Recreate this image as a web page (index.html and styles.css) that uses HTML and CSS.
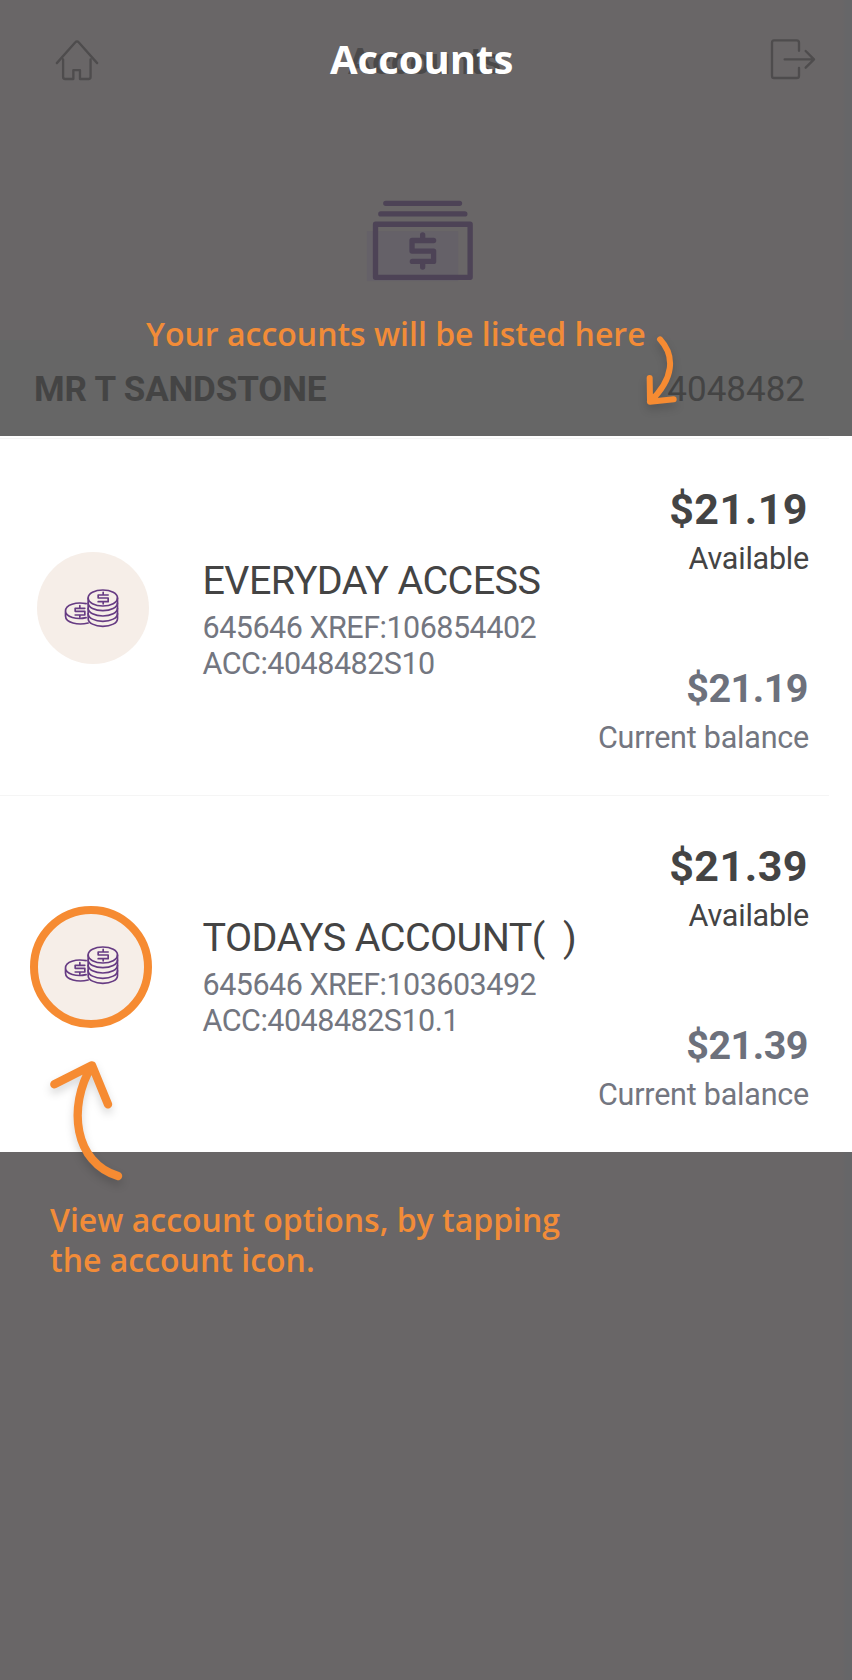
FILE: index.html
```html
<!DOCTYPE html>
<html lang="en">
<head>
    <meta charset="UTF-8">
    <meta name="viewport" content="width=device-width, initial-scale=1.0">
    <title>Accounts</title>
    <link rel="stylesheet" href="styles.css">
</head>
<body>
    <svg class="symbols" aria-hidden="true">
        <symbol id="coins" viewBox="130 143 170 120">
            <ellipse cx="249" cy="173" rx="44" ry="24"/>
            <path d="M205 173v62c0 13 20 23 44 23s44-10 44-23v-62"/>
            <path d="M205 188c0 13 20 23 44 23s44-10 44-23M205 204c0 13 20 23 44 23s44-10 44-23M205 220c0 13 20 23 44 23s44-10 44-23"/>
            <path d="M199 190c-30-6-62 3-62 22 0 18 34 27 62 20M137 212v15c0 20 37 29 68 21"/>
            <path d="M265 164h-30v9h30v11h-30M250 156v8M250 184v7M195 204h-29v9h29v11h-29M180 196v8M180 224v7"/>
        </symbol>
    </svg>

    <div class="page">
        <header class="header">
            <svg class="icon-home" viewBox="165 110 132 130">
                <path d="M170 186l56-63q5-6 10 0l56 63M189 175v53q0 6 6 6h25v-27h20v27h26q6 0 6-6v-53"/>
            </svg>
            <h1 class="title">Accounts</h1>
            <svg class="icon-logout" viewBox="1033 115 138 126">
                <path d="M1120 153v-24q0-7-7-7h-68q-6 0-6 7v99q0 7 6 7h68q7 0 7-7v-23M1077 179h87M1140 154l25 25-25 25"/>
            </svg>
        </header>

        <section class="hero">
            <svg class="icon-cash" viewBox="75 55 330 250">
                <rect class="tint" x="80" y="152" width="275" height="150"/>
                <path d="M137 68h222M122 100h253"/>
                <rect x="106" y="131" width="285" height="160"/>
                <path d="M281 180h-65v32h65v31h-64M248 163v17M248 243v17"/>
            </svg>
        </section>

        <div class="owner">
            <span class="owner-name">MR T SANDSTONE</span>
            <span class="owner-number">4048482</span>
        </div>

        <main class="list">
            <div class="account">
                <div class="badge"><svg><use href="#coins"/></svg></div>
                <div class="info">
                    <div class="name">EVERYDAY ACCESS</div>
                    <div class="ref">645646 XREF:106854402<br>ACC:4048482S10</div>
                </div>
                <div class="amounts">
                    <div class="available">$21.19</div>
                    <div class="label">Available</div>
                    <div class="current">$21.19</div>
                    <div class="label label-current">Current balance</div>
                </div>
            </div>
            <div class="account">
                <div class="badge"><svg><use href="#coins"/></svg></div>
                <div class="info">
                    <div class="name">TODAYS ACCOUNT(&nbsp; )</div>
                    <div class="ref">645646 XREF:103603492<br>ACC:4048482S10.1</div>
                </div>
                <div class="amounts">
                    <div class="available">$21.39</div>
                    <div class="label">Available</div>
                    <div class="current">$21.39</div>
                    <div class="label label-current">Current balance</div>
                </div>
            </div>
        </main>

        <!-- help overlay -->
        <div class="tip tip-title">Accounts</div>
        <div class="tip tip-list">Your accounts will be listed here</div>
        <svg class="arrow arrow-list" viewBox="640 90 140 260">
            <path d="M700 118c46 50 42 118-30 187M669 234l1 71 71-7"/>
        </svg>
        <div class="ring"></div>
        <svg class="arrow arrow-icon" viewBox="70 490 260 420">
            <path d="M295 859C165 820 141 653 217 527M104 584l113-57 48 117"/>
        </svg>
        <div class="tip tip-icon">View account options, by tapping<br>the account icon.</div>
    </div>
</body>
</html>
```

FILE: styles.css
```css
*{
    margin:0;
    padding:0;
    box-sizing:border-box;
}
body{
    background:#696667;
    font-family:Roboto, "Liberation Sans", sans-serif;
    color:#444;
}
svg{
    fill:none;
    stroke-linecap:round;
    stroke-linejoin:round;
}
.symbols{
    position:absolute;
    width:0;
    height:0;
}
.page{
    position:relative;
    width:852px;
    height:1680px;
    overflow:hidden;
    background:linear-gradient(to right, #696667 842px, #666668 846px);
}

/* header */
.header{
    display:flex;
    align-items:center;
    justify-content:space-between;
    height:120px;
    padding:0 36px 2px 55px;
}
.icon-home{
    width:44px;
    height:43px;
    stroke:#4e4c4d;
    stroke-width:7;
}
.icon-logout{
    width:46px;
    height:42px;
    stroke:#4e4c4d;
    stroke-width:7;
}
.title{
    padding:6px 20px 0 0;
    font-size:36px;
    line-height:42px;
    font-weight:700;
    color:#4a494a;
}
.hero{
    display:flex;
    justify-content:center;
    height:220px;
    padding:79px 12px 0 0;
}
.icon-cash{
    width:110px;
    height:83px;
    stroke:#4d4356;
    stroke-width:16;
}
.icon-cash .tint{
    fill:#656168;
    stroke:none;
}
.owner{
    display:flex;
    align-items:center;
    justify-content:space-between;
    height:96px;
    padding:4px 47px 0 34px;
    background:#666;
    font-size:35px;
    line-height:92px;
    color:#444;
}
.owner-name{
    font-weight:700;
    letter-spacing:-.12px;
}

/* account list */
.list{
    height:716px;
    padding-top:2px;
    background:#fff;
}
.account{
    display:flex;
    height:357px;
    padding-right:44px;
    background:linear-gradient(to right, #f5f5f5 829px, #fff 829px) top / 100% 1px no-repeat;
}
.badge{
    display:flex;
    align-items:center;
    justify-content:center;
    width:112px;
    height:112px;
    margin:114px 54px 0 36.5px;
    padding:0 2px 0 0;
    border-radius:50%;
    background:#f6eee8;
}
.badge svg{
    width:57px;
    height:40px;
    stroke:#663b83;
    stroke-width:5;
}
.info{
    flex:1;
    padding-top:120px;
    white-space:nowrap;
}
.name{
    font-size:39.5px;
    line-height:46px;
    letter-spacing:-.58px;
}
.ref{
    margin-top:6px;
    font-size:30.5px;
    line-height:35.5px;
    letter-spacing:-.5px;
    color:#737680;
}
.amounts{
    padding-top:46px;
    text-align:right;
    white-space:nowrap;
}
.available{
    font-size:43px;
    line-height:50px;
    font-weight:700;
    letter-spacing:.5px;
}
.label{
    margin:7px -1px 0 0;
    font-size:30.5px;
    line-height:36px;
    letter-spacing:-.22px;
}
.current{
    margin-top:89px;
    font-size:39.5px;
    line-height:46px;
    font-weight:700;
    letter-spacing:-.5px;
    color:#6d717c;
}
.label-current{
    margin-top:8px;
    color:#737680;
}

/* help overlay */
.tip{
    position:absolute;
    font-family:"Open Sans", sans-serif;
    font-size:32px;
    line-height:40px;
    font-weight:600;
    color:#f28c38;
    white-space:nowrap;
}
.tip-title{
    top:35px;
    left:330px;
    font-size:40px;
    line-height:48px;
    font-weight:700;
    color:#fff;
}
.tip-list{
    top:314px;
    left:146px;
}
.tip-icon{
    top:1200px;
    left:50px;
}
.ring{
    position:absolute;
    top:906px;
    left:30px;
    width:122px;
    height:122px;
    border:8px solid #f68b32;
    border-radius:50%;
}
.arrow{
    position:absolute;
    stroke:#f68b32;
    filter:drop-shadow(0 5px 4px rgba(0,0,0,.16));
}
.arrow-list{
    top:330px;
    left:640px;
    width:46.7px;
    height:86.7px;
    stroke-width:18;
}
.arrow-icon{
    top:1053.3px;
    left:43.3px;
    width:86.7px;
    height:140px;
    stroke-width:25;
}
```
